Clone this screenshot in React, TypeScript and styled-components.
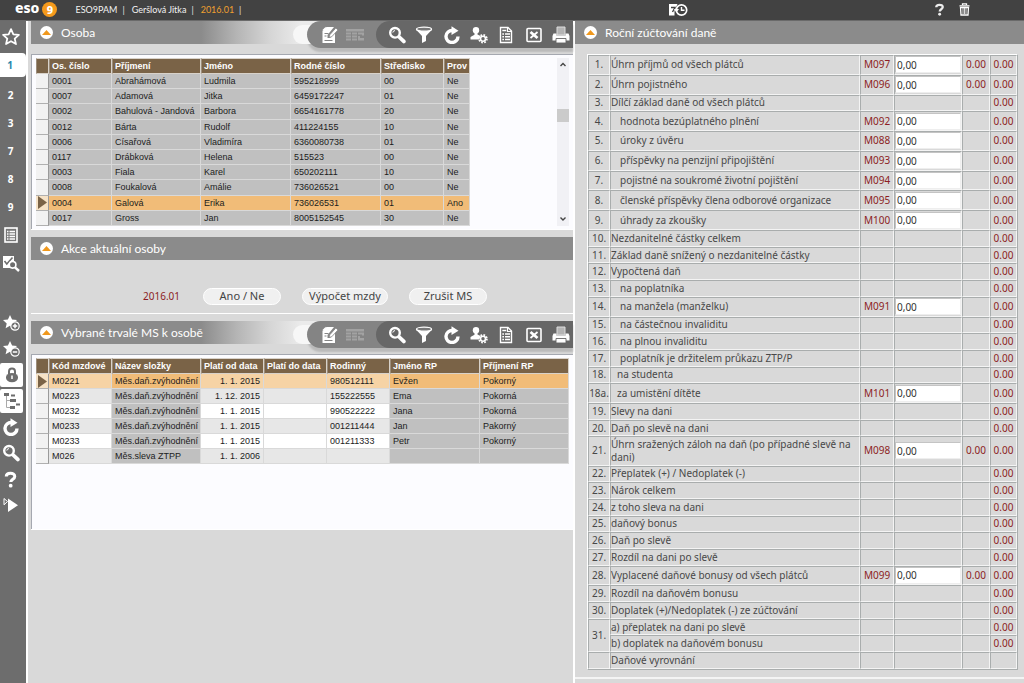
import React from "react";
import styled, { createGlobalStyle, css } from "styled-components";

const humanist = `Lato, "Noto Sans", sans-serif`;
const formFont = `"Noto Sans", "Open Sans", sans-serif`;
const grotesk = `"Liberation Sans", Arial, sans-serif`;

const GlobalStyle = createGlobalStyle`
  *, *::before, *::after { box-sizing: border-box; }
  html, body { margin: 0; background: #d9d9d9; }
  body { font-family: ${humanist}; font-size: 11px; color: #4a4a4a; }
  button { font: inherit; color: inherit; background: none; border: 0; padding: 0; margin: 0; cursor: pointer; }
  a { color: inherit; text-decoration: none; }
  svg { display: block; }
`;

/* ---------- page frame ---------- */

const Page = styled.div`
  min-height: 100vh;
  display: flex;
  flex-direction: column;
`;

const TopBar = styled.header`
  height: 21px;
  background: #424242;
  border-bottom: 1px solid #6a6a6a;
  color: #ececec;
  display: flex;
  align-items: center;
  padding: 0 0 1px 15px;
  font-size: 9px;
`;

const TopSide = styled.div`
  flex: 653 1 0;
  display: flex;
  align-items: center;
`;

const TopTools = styled.div`
  flex: 356 1 0;
  display: flex;
  align-items: center;
`;

const TopButton = styled.button`
  display: grid;
  place-items: center;
`;

const HelpGroup = styled.div`
  margin-left: auto;
  padding-right: 54px;
  display: flex;
  gap: 13px;
`;

const Logo = styled.a`
  display: flex;
  align-items: center;
  gap: 3px;
  color: #fff;
  font-family: ${formFont};
  font-size: 14px;
  line-height: 16px;
  font-weight: 800;
  margin-right: 18px;
`;

const LogoWord = styled.span`
  padding-bottom: 3px;
`;

const LogoNine = styled.span`
  width: 15px;
  height: 15px;
  border-radius: 50%;
  background: #f59a1c;
  display: grid;
  place-items: center;
  font-size: 11px;
  line-height: 15px;
`;

const Crumb = styled.span<{ $accent?: boolean }>`
  color: ${(p) => (p.$accent ? "#f0a030" : "#f2f2f2")};
  &::after {
    content: "|";
    color: #e0e0e0;
    margin: 0 7px 0 5px;
  }
`;

const Body = styled.div`
  flex: 1;
  display: flex;
`;

const Sidebar = styled.nav`
  flex: none;
  width: 26px;
  background: #6d6d6d;
  color: #fff;
  display: flex;
  flex-direction: column;
`;

const SideButton = styled.button<{ $h?: number }>`
  height: ${(p) => p.$h ?? 28}px;
  width: 21px;
  display: grid;
  place-items: center;
  font-family: ${formFont};
  font-weight: 700;
  font-size: 10px;
  color: #fff;
`;

const SideTab = styled(SideButton)`
  width: 26px;
  padding-right: 6px;
  background: #fff;
  color: #2a86ac;
  margin-bottom: 4px;
  border-radius: 0 4px 4px 0;
`;

const SideTools = styled.div`
  margin-top: 33px;
  display: flex;
  flex-direction: column;
`;

const SideToggle = styled(SideButton)`
  width: 23px;
  margin: 1px 0;
  background: #fff;
  border-radius: 2px;
  color: #6d6d6d;
`;

const Columns = styled.main`
  flex: 1;
  min-width: 0;
  display: grid;
  grid-template-columns: minmax(0, 547fr) minmax(0, 449fr);
  border-left: 2px solid #fff;
`;

const LeftColumn = styled.div`
  padding-left: 3px;
  border-right: 2px solid #fff;
  display: flex;
  flex-direction: column;
  gap: 7px;
`;

const RightColumn = styled.div`
  min-width: 0;
`;

/* ---------- panels ---------- */

const Panel = styled.section`
  border-bottom: 1px solid #fff;
`;

const PanelHead = styled.div<{ $fade?: boolean }>`
  height: 23px;
  display: flex;
  align-items: flex-start;
  justify-content: space-between;
  background: ${(p) =>
    p.$fade
      ? "linear-gradient(to right, #8b8b8b 170px, #b4b4b4 205px, #d6d6d6 240px, #ebebeb 270px)"
      : "#8b8b8b"};
`;

const PanelTitle = styled.h2`
  margin: 0;
  height: 23px;
  padding-left: 9px;
  display: flex;
  align-items: center;
  gap: 8px;
  color: #fff;
  font-size: 12px;
  line-height: 16px;
  font-weight: 400;
`;

const Collapse = styled.button`
  width: 13px;
  height: 13px;
  border-radius: 50%;
  background: #fff;
  display: grid;
  place-items: center;
`;

const Toolbar = styled.div`
  width: 266px;
  height: 27px;
  background: #848484;
  border-radius: 16px 0 0 16px;
  box-shadow: -18px 0 0 -4px #f7f7f7, 0 4px 2px #bababa;
  display: flex;
  align-items: stretch;
`;

const ToolbarLight = styled.div`
  width: 69px;
  padding: 1px 4px 0 14px;
  display: flex;
  align-items: center;
  gap: 7px;
`;

const ToolbarDark = styled.div`
  flex: 1;
  padding: 1px 3px 0 12px;
  background: #676767;
  border-radius: 14px 0 0 14px;
  display: flex;
  align-items: center;
  justify-content: space-between;
`;

const ToolButton = styled.button<{ $off?: boolean }>`
  width: 18px;
  height: 20px;
  display: grid;
  place-items: center;
  color: ${(p) => (p.$off ? "#a2a2a2" : "#fff")};
`;

const GridFrame = styled.div`
  margin-top: 10px;
  padding: 3px 4px;
  min-height: 175px;
  background: #fcfcff;
  border-top: 1px solid #a5a8b0;
  border-left: 1px solid #a5a8b0;
  display: flex;
  align-items: flex-start;
  justify-content: space-between;
`;

/* ---------- record grids ---------- */

const Grid = styled.table<{ $fill?: boolean }>`
  border-collapse: separate;
  border-spacing: 0;
  table-layout: fixed;
  align-self: ${(p) => (p.$fill ? "stretch" : "flex-start")};
  font-family: ${grotesk};
  font-size: 9px;
  line-height: 12px;
  color: #1c1c1c;
`;

const HeadCell = styled.th`
  height: 16px;
  padding: 0 0 0 2px;
  background: #7a6347;
  border: 1px solid #d8d2ca;
  border-left-color: #9c8d7b;
  color: #fff;
  text-align: left;
  font-weight: 700;
  white-space: nowrap;
`;

type Tone = "grey" | "white" | "light" | "picked" | "pickedLight";
const tones: Record<Tone, string> = {
  grey: "#c0c0c0",
  white: "#ffffff",
  light: "#e7e7e7",
  picked: "#f1bc78",
  pickedLight: "#f6d3a5",
};

const Cell = styled.td<{ $tone: Tone; $right?: boolean }>`
  height: 15px;
  padding: 1px 3px;
  overflow: hidden;
  white-space: nowrap;
  background: ${(p) => tones[p.$tone]};
  border-right: 1px solid #d9d9d9;
  border-bottom: 1px solid #d9d9d9;
  text-align: ${(p) => (p.$right ? "right" : "left")};
`;

const Marker = styled.td<{ $on?: boolean }>`
  padding: 0;
  background: #f2f2f2;
  border-right: 1px solid #9a9a9a;
  border-bottom: 1px solid #b0b0b0;
  ${(p) =>
    p.$on &&
    css`
      background: #f6e2c6;
    `}
`;

const Scrollbar = styled.div`
  width: 12px;
  align-self: stretch;
  background: #f1f1f5;
  display: flex;
  flex-direction: column;
  align-items: center;
  justify-content: space-between;
  padding: 4px 0;
`;

const ScrollTrack = styled.div`
  flex: 1;
  align-self: stretch;
  padding-top: 41px;
`;

const ScrollThumb = styled.div`
  height: 13px;
  background: #cbcbcb;
`;

/* ---------- actions ---------- */

const Actions = styled.div`
  height: 53px;
  padding: 19px 0 0 112px;
  display: flex;
  align-items: center;
  gap: 21px;
`;

const Period = styled.span`
  min-width: 39px;
  color: #8c1d24;
  font-family: ${formFont};
  font-size: 10px;
`;

const Pill = styled.button<{ $wide?: boolean }>`
  width: ${(p) => (p.$wide ? 86 : 78)}px;
  height: 17px;
  border-radius: 9px;
  border: 1px solid #fff;
  background: #f0f0f0;
  font-family: ${formFont};
  font-size: 11px;
  line-height: 14px;
  color: #444;
`;

/* ---------- tax form ---------- */

const FormArea = styled.div`
  padding: 10px 6px 7px 12px;
  border-bottom: 2px solid #f4f4f4;
`;

const FormTable = styled.table`
  width: 100%;
  height: 616px;
  table-layout: fixed;
  border-collapse: separate;
  border-spacing: 0;
  border: 1px solid #fff;
  border-right-color: #a9adad;
  border-bottom-color: #a9adad;
  font-family: ${formFont};
  font-size: 10px;
  line-height: 13px;
  color: #484848;
`;

const FormCell = styled.td<{ $center?: boolean; $indent?: number }>`
  height: 16px;
  padding: 0 0 0 ${(p) => p.$indent ?? 0}px;
  border: 1px solid #f4f4f4;
  border-top-color: #a9adad;
  border-left-color: #a9adad;
  text-align: ${(p) => (p.$center ? "center" : "left")};
`;

const ValueCell = styled(FormCell)`
  text-align: center;
  color: #8c1d24;
`;

const AmountInput = styled.input`
  display: block;
  width: 66px;
  height: 17px;
  padding: 0 0 0 1px;
  border: 1px solid #c4c4c4;
  border-right-color: #eee;
  border-bottom-color: #eee;
  background: #fff;
  font-family: ${formFont};
  font-size: 10px;
  line-height: 14px;
  color: #333;
  outline: none;
`;

/* ---------- icons ---------- */

const starPath = "M8 1l2.1 4.6 4.9.5-3.7 3.3 1.1 4.9L8 11.8l-4.4 2.5 1.1-4.9L1 6.1l4.9-.5z";

const StarIcon = () => (
  <svg width="18" height="18" viewBox="0 0 16 16">
    <path d={starPath} fill="none" stroke="currentColor" strokeWidth="1.6" strokeLinejoin="round" />
  </svg>
);

const StarSignIcon = ({ plus }: { plus?: boolean }) => (
  <svg width="18" height="18" viewBox="0 0 18 18">
    <path d={starPath} fill="currentColor" />
    <circle cx="13" cy="12" r="4.2" fill="#6d6d6d" stroke="currentColor" strokeWidth="1.2" />
    <path d={plus ? "M10.8 12h4.4M13 9.8v4.4" : "M10.8 12h4.4"} stroke="currentColor" strokeWidth="1.5" />
  </svg>
);

const ListIcon = () => (
  <svg width="14" height="16" viewBox="0 0 14 16">
    <rect x="1" y="1" width="12" height="14" fill="#777" stroke="currentColor" strokeWidth="1.6" />
    <path d="M3 4.5h1.5M3 7h1.5M3 9.5h1.5M3 12h1.5M5.5 4.5H11M5.5 7H11M5.5 9.5H11M5.5 12H11" stroke="currentColor" strokeWidth="1.3" />
  </svg>
);

const CheckSearchIcon = () => (
  <svg width="18" height="17" viewBox="0 0 18 17">
    <path d="M1 1h11v6H9v6H1z" fill="currentColor" />
    <path d="M2.5 6l2.3 3L10.5 2.5" fill="none" stroke="#6d6d6d" strokeWidth="1.6" />
    <circle cx="10.6" cy="9.8" r="3.3" fill="#6d6d6d" stroke="currentColor" strokeWidth="1.6" />
    <path d="M13 12.3l4 3.7" stroke="currentColor" strokeWidth="2.4" />
  </svg>
);

const LockIcon = () => (
  <svg width="14" height="16" viewBox="0 0 14 16">
    <path d="M4 7V4.6a3 3 0 0 1 6 0V7" fill="none" stroke="currentColor" strokeWidth="2" />
    <path d="M1 10a6 4 0 0 1 12 0v1a6 4.2 0 0 1-12 0z" fill="currentColor" />
    <path d="M7 8.5v3.5" stroke="#fff" strokeWidth="1.5" />
  </svg>
);

const TreeIcon = () => (
  <svg width="18" height="20" viewBox="0 0 18 20">
    <path d="M3.5 4v12.5H8M3.5 9.5H8" fill="none" stroke="#aaa" strokeWidth="1" />
    <path d="M1 2h5v3H1zM8 3.5h4v2H8zM7 8h6v3H7zM7 15h5v3H7zM13 12.5h4v2h-4z" fill="currentColor" />
  </svg>
);

const RefreshIcon = () => (
  <svg width="18" height="18" viewBox="0 0 18 18">
    <path d="M15 10.5A6 6 0 1 1 9.5 4.5" fill="none" stroke="currentColor" strokeWidth="3.4" />
    <path d="M8.5.2l7 4.6-7 4.2z" fill="currentColor" />
  </svg>
);

const SearchIcon = () => (
  <svg width="18" height="18" viewBox="0 0 18 18">
    <circle cx="7" cy="6.8" r="4.8" fill="none" stroke="currentColor" strokeWidth="2.4" />
    <path d="M4.8 6.6A2.2 2.2 0 0 1 7 4.6" fill="none" stroke="currentColor" strokeWidth="1" />
    <path d="M11.2 11l4.600 4.400" stroke="currentColor" strokeWidth="3.8" strokeLinecap="round" />
  </svg>
);

const HelpIcon = ({ size = 17 }: { size?: number }) => (
  <svg width={size} height={size} viewBox="0 0 18 18">
    <path d="M4.500 5.800C4.500 1.500 13.500 1.300 13.500 5.700c0 3-4.200 2.900-4.200 6" fill="none" stroke="currentColor" strokeWidth="3.200" />
    <circle cx="9.200" cy="15.500" r="2" fill="currentColor" />
  </svg>
);

const PlayIcon = () => (
  <svg width="16" height="16" viewBox="0 0 16 16">
    <path d="M5 1.500l10 6.700L5 15z" fill="currentColor" />
    <path d="M1 1.500l3.500 3L1 7.800z" fill="none" stroke="currentColor" strokeWidth="1" />
  </svg>
);

const EditIcon = () => (
  <svg width="18" height="18" viewBox="0 0 18 18">
    <path d="M5.500 1H13l-6.500 8v3H9l5-5.500V17H1.500V5z" fill="currentColor" />
    <path d="M1.200 4.300L4.800.800v3.500z" fill="currentColor" />
    <path d="M3.500 7.500h4M3.500 10h2M3.500 14.500h8" stroke="#848484" strokeWidth="1" />
    <path d="M8 11.500l.8-2.700 6-6.800 2.200 1.900-6.200 6.800z" fill="currentColor" stroke="#848484" strokeWidth=".8" />
  </svg>
);

const TableIcon = () => (
  <svg width="18" height="14" viewBox="0 0 18 14">
    <path d="M0 1h18v2.500H0zM0 4.500h5v2H0zM6 4.500h5v2H6zM12 4.500h6v3h-2v-1h-4zM0 7.500h5v2H0zM6 7.500h5v2H6zM12 8h2v2h4v2.500h-6zM0 10.500h5v2H0zM6 10.500h5v2H6z" fill="currentColor" />
  </svg>
);

const FilterIcon = () => (
  <svg width="18" height="18" viewBox="0 0 18 18">
    <path d="M1 3.500L7 10v7l4-2v-5l6-6.500z" fill="currentColor" />
    <ellipse cx="9" cy="3.200" rx="7.500" ry="2" fill="#777" stroke="currentColor" strokeWidth="1.300" />
  </svg>
);

const PersonGearIcon = () => (
  <svg width="18" height="18" viewBox="0 0 18 18">
    <circle cx="6" cy="4.300" r="3.200" fill="currentColor" />
    <path d="M4.500 6h3v2.500l3 1.500-1.500 3.500H.500V11L4.500 8.700z" fill="currentColor" />
    <circle cx="13" cy="12.800" r="3.900" fill="none" stroke="currentColor" strokeWidth="1.700" strokeDasharray="1.700 1.360" />
    <circle cx="13" cy="12.800" r="2.500" fill="#676767" stroke="currentColor" strokeWidth="1.600" />
  </svg>
);

const DocIcon = () => (
  <svg width="14" height="18" viewBox="0 0 14 18">
    <path d="M1.500 1.500h7.500l3.500 3.500v11.500h-11z" fill="none" stroke="currentColor" strokeWidth="1.400" />
    <path d="M8.500 1.500v4h4" fill="none" stroke="currentColor" strokeWidth="1.200" />
    <path d="M3.300 4.500h4M3.300 8h1.700M6 8h5M3.300 10.700h1.700M6 10.700h5M3.300 13.500h1.700M6 13.500h5" stroke="currentColor" strokeWidth="1.400" />
  </svg>
);

const ExcelIcon = () => (
  <svg width="16" height="16" viewBox="0 0 16 16">
    <rect x="1" y="1.500" width="14" height="13" rx="1" fill="none" stroke="currentColor" strokeWidth="1.600" />
    <path d="M4.500 5l7 6" stroke="currentColor" strokeWidth="2.800" />
    <path d="M11.500 5l-7 6" stroke="currentColor" strokeWidth="1.800" />
  </svg>
);

const PrintIcon = () => (
  <svg width="18" height="18" viewBox="0 0 18 18">
    <path d="M5 1h8v8H5z" fill="#b5b5b5" stroke="#dedede" strokeWidth="1" />
    <path d="M1.500 7.500H4.500V9.500h9V7.500H16.500L17.500 10v4.500H.500V10z" fill="currentColor" />
    <path d="M4 12.500h10V17H4z" fill="currentColor" stroke="#676767" strokeWidth=".900" />
  </svg>
);

const ArrowUpIcon = () => (
  <svg width="9" height="5" viewBox="0 0 9 5">
    <path d="M0 5L4.500 0 9 5z" fill="#f0981c" />
  </svg>
);

const HistoryIcon = () => (
  <svg width="20" height="14" viewBox="0 0 20 14">
    <path d="M1 1h8.500L8 4.500 6.500 8v4.500H1z" fill="#fff" />
    <path d="M3 4.500h4L4.500 9" fill="none" stroke="#424242" strokeWidth="1.400" />
    <circle cx="13.500" cy="7" r="5.200" fill="#424242" stroke="#fff" strokeWidth="1.700" />
    <path d="M13.500 4v3.300h3" fill="none" stroke="#fff" strokeWidth="1.400" />
    <path d="M6 6h5l-2.500 3.500z" fill="#fff" />
  </svg>
);

const TrashIcon = () => (
  <svg width="11" height="13" viewBox="0 0 11 13">
    <path d="M3.500 2V.800h4V2M.500 2.800h10" fill="none" stroke="#fff" strokeWidth="1.300" />
    <path d="M1.500 4.500h8L9 12H2z" fill="none" stroke="#fff" strokeWidth="1.300" />
    <path d="M4 5v6M5.500 5v6M7 5v6" stroke="#fff" strokeWidth=".800" />
  </svg>
);

const PointerIcon = () => (
  <svg width="11" height="13" viewBox="0 0 11 13">
    <path d="M2 0l9 6.500L2 13z" fill="#7a6347" />
  </svg>
);

const Chevron = ({ down }: { down?: boolean }) => (
  <svg width="8" height="6" viewBox="0 0 8 6">
    <path d={down ? "M1.500 1.500L4 4l2.500-2.500" : "M1.500 4L4 1.500 6.500 4"} fill="none" stroke="#444" strokeWidth="1.400" />
  </svg>
);

/* ---------- data ---------- */

const people = [
  ["0001", "Abrahámová", "Ludmila", "595218999", "00", "Ne"],
  ["0007", "Adamová", "Jitka", "6459172247", "01", "Ne"],
  ["0002", "Bahulová - Jandová", "Barbora", "6654161778", "20", "Ne"],
  ["0012", "Bárta", "Rudolf", "411224155", "10", "Ne"],
  ["0006", "Císařová", "Vladimíra", "6360080738", "01", "Ne"],
  ["0117", "Drábková", "Helena", "515523", "00", "Ne"],
  ["0003", "Fiala", "Karel", "650202111", "10", "Ne"],
  ["0008", "Foukalová", "Amálie", "736026521", "00", "Ne"],
  ["0004", "Galová", "Erika", "736026531", "01", "Ano"],
  ["0017", "Gross", "Jan", "8005152545", "30", "Ne"],
];

const wages = [
  ["M0221", "Měs.daň.zvýhodnění", "1. 1. 2015", "", "980512111", "Evžen", "Pokorný"],
  ["M0223", "Měs.daň.zvýhodnění", "1. 12. 2015", "", "155222555", "Ema", "Pokorná"],
  ["M0232", "Měs.daň.zvýhodnění", "1. 1. 2015", "", "990522222", "Jana", "Pokorná"],
  ["M0233", "Měs.daň.zvýhodnění", "1. 1. 2015", "", "001211444", "Jan", "Pakorný"],
  ["M0233", "Měs.daň.zvýhodnění", "1. 1. 2015", "", "001211333", "Petr", "Pokorný"],
  ["M026", "Měs.sleva ZTPP", "1. 1. 2006", "", "", "", ""],
];

type Line = { no?: string; span?: number; text: string; indent?: number; code?: string; sub?: boolean; total?: boolean };

const lines: Line[] = [
  { no: "1.", text: "Úhrn příjmů od všech plátců", code: "M097", sub: true },
  { no: "2.", text: "Úhrn pojistného", code: "M096", sub: true },
  { no: "3.", text: "Dílčí základ daně od všech plátců" },
  { no: "4.", text: "hodnota bezúplatného plnění", indent: 9, code: "M092" },
  { no: "5.", text: "úroky z úvěru", indent: 9, code: "M088" },
  { no: "6.", text: "příspěvky na penzijní připojištění", indent: 9, code: "M093" },
  { no: "7.", text: "pojistné na soukromé životní pojištění", indent: 9, code: "M094" },
  { no: "8.", text: "členské příspěvky člena odborové organizace", indent: 9, code: "M095" },
  { no: "9.", text: "úhrady za zkoušky", indent: 9, code: "M100" },
  { no: "10.", text: "Nezdanitelné částky celkem" },
  { no: "11.", text: "Základ daně snížený o nezdanitelné částky" },
  { no: "12.", text: "Vypočtená daň" },
  { no: "13.", text: "na poplatníka", indent: 9 },
  { no: "14.", text: "na manžela (manželku)", indent: 9, code: "M091" },
  { no: "15.", text: "na částečnou invaliditu", indent: 9 },
  { no: "16.", text: "na plnou invaliditu", indent: 9 },
  { no: "17.", text: "poplatník je držitelem průkazu ZTP/P", indent: 9 },
  { no: "18.", text: "na studenta", indent: 6 },
  { no: "18a.", text: "za umistění dítěte", indent: 6, code: "M101" },
  { no: "19.", text: "Slevy na dani" },
  { no: "20.", text: "Daň po slevě na dani" },
  { no: "21.", text: "Úhrn sražených záloh na daň (po případné slevě na dani)", code: "M098", sub: true },
  { no: "22.", text: "Přeplatek (+) / Nedoplatek (-)" },
  { no: "23.", text: "Nárok celkem" },
  { no: "24.", text: "z toho sleva na dani" },
  { no: "25.", text: "daňový bonus" },
  { no: "26.", text: "Daň po slevě" },
  { no: "27.", text: "Rozdíl na dani po slevě" },
  { no: "28.", text: "Vyplacené daňové bonusy od všech plátců", code: "M099", sub: true },
  { no: "29.", text: "Rozdíl na daňovém bonusu" },
  { no: "30.", text: "Doplatek (+)/Nedoplatek (-) ze zúčtování" },
  { no: "31.", span: 2, text: "a) přeplatek na dani po slevě" },
  { text: "b) doplatek na daňovém bonusu" },
  { no: "", text: "Daňové vyrovnání", total: false },
];

/* ---------- composed parts ---------- */

const Heading = ({ title }: { title: string }) => (
  <PanelTitle>
    <Collapse aria-label={"Sbalit " + title}>
      <ArrowUpIcon />
    </Collapse>
    {title}
  </PanelTitle>
);

const GridToolbar = () => (
  <Toolbar>
    <ToolbarLight>
      <ToolButton aria-label="Upravit"><EditIcon /></ToolButton>
      <ToolButton aria-label="Tabulka" $off><TableIcon /></ToolButton>
    </ToolbarLight>
    <ToolbarDark>
      <ToolButton aria-label="Hledat"><SearchIcon /></ToolButton>
      <ToolButton aria-label="Filtr"><FilterIcon /></ToolButton>
      <ToolButton aria-label="Obnovit"><RefreshIcon /></ToolButton>
      <ToolButton aria-label="Nastavení"><PersonGearIcon /></ToolButton>
      <ToolButton aria-label="Dokument"><DocIcon /></ToolButton>
      <ToolButton aria-label="Excel"><ExcelIcon /></ToolButton>
      <ToolButton aria-label="Tisk"><PrintIcon /></ToolButton>
    </ToolbarDark>
  </Toolbar>
);

type RecordGridProps = {
  widths: number[];
  heads: string[];
  rows: string[][];
  picked: number;
  fill?: boolean;
  rightCol?: number;
  toneOf: (row: number, col: number) => Tone;
};

const RecordGrid = ({ widths, heads, rows, picked, fill, rightCol, toneOf }: RecordGridProps) => (
  <Grid $fill={fill} style={{ width: widths.reduce((a, b) => a + b, 0) }}>
    <colgroup>
      {widths.map((w, i) => (
        <col key={i} width={w} />
      ))}
    </colgroup>
    <thead>
      <tr>
        <HeadCell />
        {heads.map((h) => (
          <HeadCell key={h} scope="col">{h}</HeadCell>
        ))}
      </tr>
    </thead>
    <tbody>
      {rows.map((row, r) => (
        <tr key={r}>
          <Marker $on={r === picked}>{r === picked && <PointerIcon />}</Marker>
          {row.map((value, c) => (
            <Cell key={c} $tone={toneOf(r, c)} $right={c === rightCol}>
              {value}
            </Cell>
          ))}
        </tr>
      ))}
    </tbody>
  </Grid>
);

const wageTone = (r: number, c: number): Tone => {
  const locked = c === 1 || c >= 5;
  if (r === 0) return locked ? "picked" : "pickedLight";
  if (locked) return "grey";
  return r % 2 ? "light" : "white";
};

const TaxForm = () => (
  <FormTable>
    <colgroup>
      <col width="22" />
      <col />
      <col width="34" />
      <col width="68" />
      <col width="28" />
      <col width="27" />
    </colgroup>
    <tbody>
      {lines.map((l, i) => (
        <tr key={i}>
          {l.no !== undefined && (
            <FormCell $center rowSpan={l.span}>
              {l.no}
            </FormCell>
          )}
          <FormCell $indent={l.indent}>
            {l.code ? <label htmlFor={l.code}>{l.text}</label> : l.text}
          </FormCell>
          <ValueCell>{l.code}</ValueCell>
          <FormCell>{l.code && <AmountInput id={l.code} defaultValue="0,00" />}</FormCell>
          <ValueCell>{l.sub && "0.00"}</ValueCell>
          <ValueCell>{l.total !== false && "0.00"}</ValueCell>
        </tr>
      ))}
    </tbody>
  </FormTable>
);

export default function App() {
  return (
    <Page>
      <GlobalStyle />
      <TopBar>
        <TopSide>
          <Logo href="#">
            <LogoWord>eso</LogoWord>
            <LogoNine>9</LogoNine>
          </Logo>
          <Crumb>ESO9PAM</Crumb>
          <Crumb>Geršlová Jitka</Crumb>
          <Crumb $accent>2016.01</Crumb>
        </TopSide>
        <TopTools>
          <TopButton aria-label="Historie"><HistoryIcon /></TopButton>
          <HelpGroup>
            <TopButton aria-label="Nápověda"><HelpIcon size={13} /></TopButton>
            <TopButton aria-label="Koš"><TrashIcon /></TopButton>
          </HelpGroup>
        </TopTools>
      </TopBar>
      <Body>
        <Sidebar>
          <SideButton $h={32} aria-label="Oblíbené"><StarIcon /></SideButton>
          <SideTab $h={24}>1</SideTab>
          {["2", "3", "7", "8", "9"].map((n) => (
            <SideButton key={n}>{n}</SideButton>
          ))}
          <SideButton aria-label="Seznam"><ListIcon /></SideButton>
          <SideButton aria-label="Kontrola"><CheckSearchIcon /></SideButton>
          <SideTools>
            <SideButton $h={26} aria-label="Přidat k oblíbeným"><StarSignIcon plus /></SideButton>
            <SideButton $h={26} aria-label="Odebrat z oblíbených"><StarSignIcon /></SideButton>
            <SideToggle $h={24} aria-label="Zámek"><LockIcon /></SideToggle>
            <SideToggle $h={24} aria-label="Strom"><TreeIcon /></SideToggle>
            <SideButton $h={26} aria-label="Obnovit stránku"><RefreshIcon /></SideButton>
            <SideButton $h={26} aria-label="Vyhledat"><SearchIcon /></SideButton>
            <SideButton $h={26} aria-label="Nápověda k stránce"><HelpIcon /></SideButton>
            <SideButton $h={26} aria-label="Spustit"><PlayIcon /></SideButton>
          </SideTools>
        </Sidebar>
        <Columns>
          <LeftColumn>
            <Panel>
              <PanelHead $fade>
                <Heading title="Osoba" />
                <GridToolbar />
              </PanelHead>
              <GridFrame>
                <RecordGrid
                  fill
                  widths={[13, 63, 89, 90, 90, 63, 26]}
                  heads={["Os. číslo", "Příjmení", "Jméno", "Rodné číslo", "Středisko", "Prov"]}
                  rows={people}
                  picked={8}
                  toneOf={(r) => (r === 8 ? "picked" : "grey")}
                />
                <Scrollbar>
                  <Chevron />
                  <ScrollTrack>
                    <ScrollThumb />
                  </ScrollTrack>
                  <Chevron down />
                </Scrollbar>
              </GridFrame>
            </Panel>
            <Panel>
              <PanelHead>
                <Heading title="Akce aktuální osoby" />
              </PanelHead>
              <Actions>
                <Period>2016.01</Period>
                <Pill>Ano / Ne</Pill>
                <Pill $wide>Výpočet mzdy</Pill>
                <Pill>Zrušit MS</Pill>
              </Actions>
            </Panel>
            <Panel>
              <PanelHead $fade>
                <Heading title="Vybrané trvalé MS k osobě" />
                <GridToolbar />
              </PanelHead>
              <GridFrame>
                <RecordGrid
                  widths={[13, 63, 89, 63, 63, 63, 90, 89]}
                  heads={["Kód mzdové", "Název složky", "Platí od data", "Platí do data", "Rodinný", "Jméno RP", "Příjmení RP"]}
                  rows={wages}
                  picked={0}
                  rightCol={2}
                  toneOf={wageTone}
                />
              </GridFrame>
            </Panel>
          </LeftColumn>
          <RightColumn>
            <PanelHead>
              <Heading title="Roční zúčtování daně" />
            </PanelHead>
            <FormArea>
              <TaxForm />
            </FormArea>
          </RightColumn>
        </Columns>
      </Body>
    </Page>
  );
}
